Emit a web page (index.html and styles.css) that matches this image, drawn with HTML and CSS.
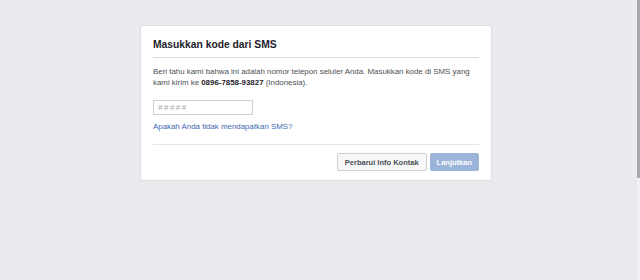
FILE: index.html
```
<!DOCTYPE html>
<html lang="id">
<head>
    <meta charset="UTF-8">
    <title>Masukkan kode dari SMS</title>
    <link rel="stylesheet" href="styles.css">
</head>
<body>
    <div class="checkpoint-card">
        <div class="card-header">
            <h2 class="card-title">Masukkan kode dari SMS</h2>
        </div>

        <div class="card-body">
            <p class="info-text">Beri tahu kami bahwa ini adalah nomor telepon seluler Anda. Masukkan kode di SMS yang kami kirim ke <strong>0896-7858-93827</strong> (Indonesia).</p>
            <input type="text" class="code-input" placeholder="#####">
            <a href="#" class="resend-link">Apakah Anda tidak mendapatkan SMS?</a>
        </div>

        <div class="card-footer">
            <button class="btn btn-secondary">Perbarui Info Kontak</button>
            <button class="btn btn-primary" disabled>Lanjutkan</button>
        </div>
    </div>

    <div class="scrollbar"><div class="scrollbar-thumb"></div></div>
</body>
</html>
```

FILE: styles.css
```
body {
    margin: 0;
    padding-top: 25px;
    height: 255px;
    background-color: #e9ebee;
    font-family: 'Liberation Sans', Arial, sans-serif;
    overflow: hidden;
}

.checkpoint-card {
    width: 326px;
    margin-left: 140px;
    padding: 0 12px 9px;
    background-color: #fff;
    border: 1px solid #dddfe2;
    border-radius: 3px;
}

.card-header {
    padding: 12px 0 5px;
    border-bottom: 1px solid #dadde1;
}

.card-title {
    margin: 0;
    font-size: 10.3px;
    line-height: 14px;
    font-weight: bold;
    color: #1d2129;
}

.card-body {
    padding: 8px 0 12px;
    border-bottom: 1px solid #e5e5e5;
}

.info-text {
    margin: 0 0 12px;
    font-size: 7.9px;
    line-height: 11px;
    color: #4b4f56;
}

.info-text strong {
    color: #1d2129;
}

.code-input {
    display: block;
    box-sizing: border-box;
    width: 100px;
    height: 15px;
    margin-bottom: 6px;
    padding: 0 4px;
    border: 1px solid #ccd0d5;
    font-family: inherit;
    font-size: 8px;
    color: #1d2129;
}

.code-input::placeholder {
    color: #a4a8ae;
    letter-spacing: 1.5px;
}

.resend-link {
    display: block;
    font-size: 7.9px;
    line-height: 11px;
    color: #4267b2;
    text-decoration: none;
}

.card-footer {
    display: flex;
    justify-content: flex-end;
    gap: 3px;
    padding: 8px 0 0;
}

.btn {
    height: 18px;
    padding: 0 6px;
    border-radius: 2px;
    font-family: inherit;
    font-size: 7.5px;
    font-weight: bold;
}

.btn-secondary {
    padding: 0 7px;
    background-color: #f6f7f9;
    border: 1px solid #ced0d4;
    color: #4b4f56;
}

.btn-primary {
    background-color: #9cb4d8;
    border: 1px solid #9cb4d8;
    color: #fff;
}

.scrollbar {
    position: fixed;
    top: 0;
    right: 0;
    width: 3px;
    height: 280px;
    background-color: #f1f1f1;
}

.scrollbar-thumb {
    height: 178px;
    background-color: #a8a8a8;
}
```
